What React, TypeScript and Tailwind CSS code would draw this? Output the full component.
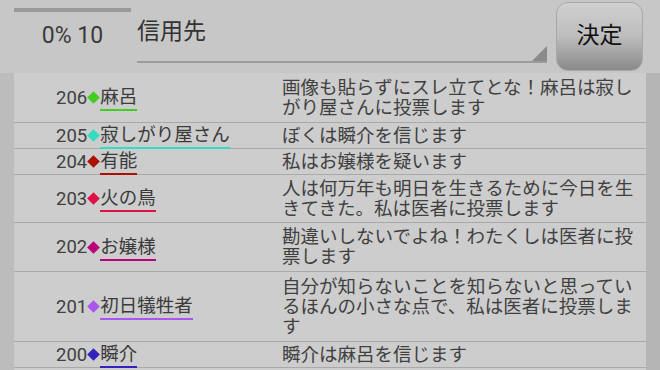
const rows = [
  { no: 206, name: "麻呂", dot: "bg-[#44cc22]", line: "border-[#44cc22]", h: "h-[50px]", msg: "画像も貼らずにスレ立てとな！麻呂は寂しがり屋さんに投票します" },
  { no: 205, name: "寂しがり屋さん", dot: "bg-[#33ddc0]", line: "border-[#33ddc0]", h: "h-[26px]", msg: "ぼくは瞬介を信じます" },
  { no: 204, name: "有能", dot: "bg-[#aa1100]", line: "border-[#aa1100]", h: "h-[26px]", msg: "私はお嬢様を疑います" },
  { no: 203, name: "火の鳥", dot: "bg-[#dd1144]", line: "border-[#dd1144]", h: "h-[48px]", msg: "人は何万年も明日を生きるために今日を生きてきた。私は医者に投票します" },
  { no: 202, name: "お嬢様", dot: "bg-[#bb0077]", line: "border-[#bb0077]", h: "h-[49px]", msg: "勘違いしないでよね！わたくしは医者に投票します" },
  { no: 201, name: "初日犠牲者", dot: "bg-[#aa55ee]", line: "border-[#aa55ee]", h: "h-[70px]", msg: "自分が知らないことを知らないと思っているほんの小さな点で、私は医者に投票します" },
  { no: 200, name: "瞬介", dot: "bg-[#3322bb]", line: "border-[#3322bb]", h: "h-[26px]", msg: "瞬介は麻呂を信じます" },
];

const font = { fontFamily: '"Roboto", "Noto Sans CJK JP", sans-serif' };

export default function App() {
  return (
    <div className="w-[660px] h-[370px] overflow-hidden bg-[#c7c7c7] text-[#404040] flex flex-col" style={font}>
      {/* ヘッダー */}
      <div className="h-[73px] flex shrink-0">
        <div className="ml-[14px] w-[117px] flex flex-col">
          <div className="mt-[8px] h-[4px] bg-[#9a9a9a]" />
          <div className="mt-[10px] text-center text-[23px] leading-[28px] text-[#3a3a3a]">0% 10</div>
        </div>
        <div className="ml-[6px] w-[410px] h-[63px] relative border-b-2 border-[#9c9c9c]">
          <div className="mt-[17px] text-[23px] leading-[30px] text-[#333]">信用先</div>
          <svg className="absolute right-0 bottom-0" width="15" height="15" viewBox="0 0 15 15">
            <polygon points="15,0 15,15 0,15" fill="#8a8a8a" />
          </svg>
        </div>
        <button className="ml-[9px] mt-[2px] w-[87px] h-[69px] rounded-[12px] border border-[#a8a8a8] bg-gradient-to-b from-[#d0d0d0] via-[#bdbdbd] to-[#8a8a8a] text-[23px] text-[#111] flex items-center justify-center">
          決定
        </button>
      </div>

      {/* 一覧 */}
      <div className="flex flex-1">
        <div className="w-[14px] bg-[#bcbcbc]" />
        <div className="w-[632px] bg-[#cdcdcd]">
          {rows.map((r) => (
            <div key={r.no} className={`${r.h} flex items-center border-b border-[#a9a9a9]`}>
              <div className="w-[268px] pl-[42px] flex items-center">
                <span className="text-[18.5px] leading-[20px]">{r.no}</span>
                <span className={`${r.dot} inline-block w-[9px] h-[9px] rotate-45 mx-[2px]`} />
                <span className={`${r.line} text-[18.5px] leading-[20px] border-b-2 pb-[2px] mt-[3px] text-[#3a3a3a]`}>{r.name}</span>
              </div>
              <div className="w-[360px] text-[18.5px] leading-[20px]">{r.msg}</div>
            </div>
          ))}
        </div>
        <div className="w-[14px] bg-[#b5b5b5]" />
      </div>
    </div>
  );
}
